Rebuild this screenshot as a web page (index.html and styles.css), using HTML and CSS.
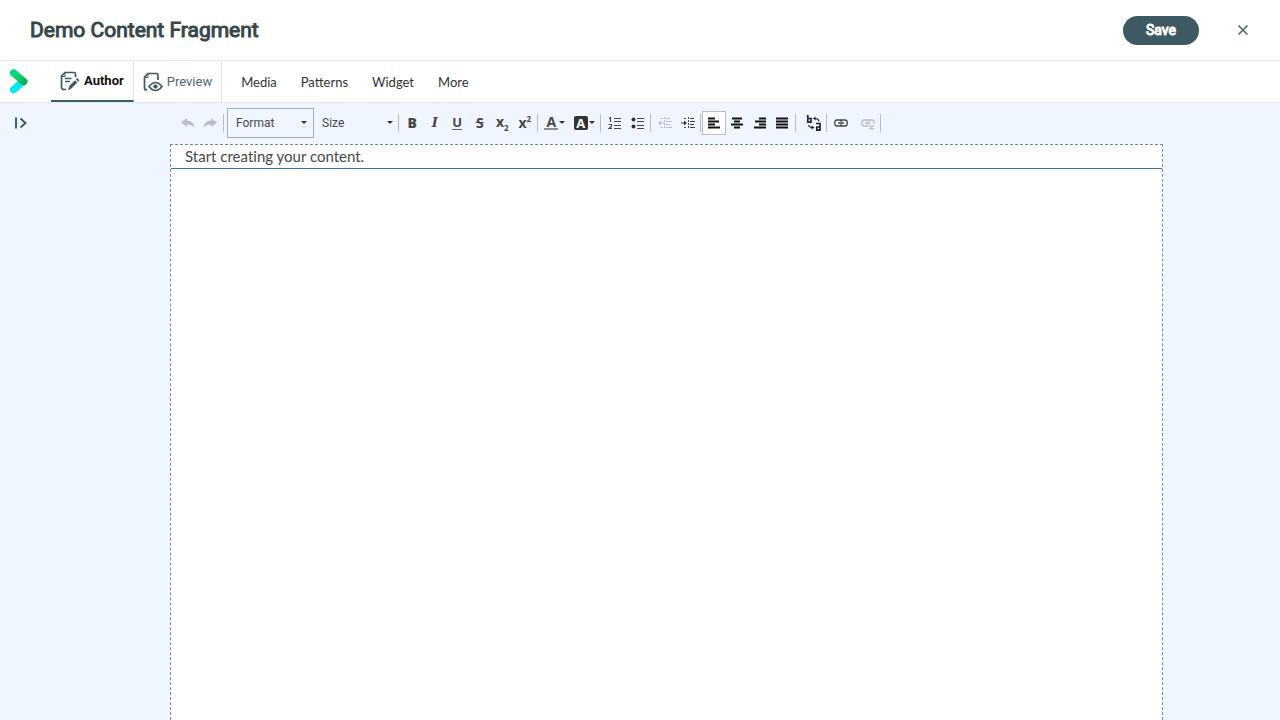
FILE: index.html
```html
<!DOCTYPE html>
<html lang="en">
<head>
<meta charset="utf-8">
<meta name="viewport" content="width=device-width, initial-scale=1">
<title>Demo Content Fragment</title>
<link rel="stylesheet" href="styles.css">
</head>
<body>
<header class="titlebar">
  <h1 class="title">Demo Content Fragment</h1>
  <button class="save" type="button">Save</button>
  <button class="close" type="button" aria-label="Close">
    <svg width="12" height="12" viewBox="0 0 12 12"><path d="M1.500 1.500l9 9M10.500 1.500l-9 9" fill="none" stroke="#4f676c" stroke-width="1.600"/></svg>
  </button>
</header>
<nav class="navbar">
  <a class="logo" href="#" aria-label="Home">
    <svg width="20" height="28" viewBox="0 0 20 28">
      <defs>
        <linearGradient id="logo-top" x1="0" y1="0" x2="1" y2="1"><stop offset="0" stop-color="#00dc7c"/><stop offset=".6" stop-color="#14cc66"/><stop offset="1" stop-color="#0ab058"/></linearGradient>
      </defs>
      <path d="M4.700 22.500L14 14.500" stroke="#05e6f5" stroke-width="7.500" stroke-linecap="round"/>
      <path d="M4.700 6L14.700 14.500" stroke="url(#logo-top)" stroke-width="7.500" stroke-linecap="round"/>
    </svg>
  </a>
  <a class="mode mode-active" href="#">
    <svg class="mode-icon" width="20" height="20" viewBox="0 0 20 20" fill="none" stroke="#3d5a63" stroke-width="1.700">
      <path d="M15.500 6V3Q15.500 1.500 14 1.500H5L1.500 5V16Q1.500 18.500 4 18.500H6"/><path d="M1.500 5.500H5V1.500" stroke-width="1"/>
      <path d="M5 7.500H11.500M5 10.500H10" stroke-width="1.300"/>
      <path d="M10 16.500L16.200 10.300" stroke-width="3.200"/><path d="M17 9.500L18.300 8.200" stroke-width="3.200"/><path d="M8 19l1-3.500 2.500 2.500z" fill="#3d5a63" stroke="none"/>
    </svg>
    Author
  </a>
  <a class="mode" href="#">
    <svg class="mode-icon" width="20" height="20" viewBox="0 0 20 20" fill="none" stroke="#3d5a63" stroke-width="1.700">
      <path d="M15 8V3Q15 1.500 13.500 1.500H5L1.500 5V16Q1.500 18 4 18"/><path d="M1.500 5.500H5V1.500" stroke-width="1"/>
      <path d="M6 14.500Q12.500 6.500 19 14.500Q12.500 22.500 6 14.500Z"/><circle cx="12.500" cy="14.500" r="1.700" fill="#3d5a63" stroke-width="1"/>
    </svg>
    Preview
  </a>
  <div class="menus">
    <a class="menu" href="#">Media</a><a class="menu" href="#">Patterns</a><a class="menu" href="#">Widget</a><a class="menu" href="#">More</a>
  </div>
</nav>
<main class="workspace">
  <aside class="rail">
    <button class="expand" type="button" aria-label="Expand panel">
      <svg width="14" height="14" viewBox="0 0 14 14" fill="none" stroke="#3d5a63" stroke-width="1.900"><path d="M2 1.500V12.500M6.500 2.500L11.500 7L6.500 11.500"/></svg>
    </button>
  </aside>
  <section class="editor">
    <div class="toolbar" role="toolbar" aria-label="Formatting">
      <div class="group group-history">
        <button class="tool" type="button" aria-label="Undo" disabled><svg width="14" height="12" viewBox="0 0 14 12"><path d="M6 1V3.600Q12.500 4 13.500 10.500Q10.500 7.500 6 7.500V10L0 5.500Z" fill="#b9bfc3"/></svg></button>
        <button class="tool" type="button" aria-label="Redo" disabled><svg width="14" height="12" viewBox="0 0 14 12"><path d="M8 1V3.600Q1.500 4 .500 10.500Q3.500 7.500 8 7.500V10L14 5.500Z" fill="#b9bfc3"/></svg></button>
      </div>
      <label class="combo combo-boxed"><select class="select" aria-label="Format"><option>Format</option></select><i class="caret"></i></label>
      <label class="combo"><select class="select" aria-label="Size"><option>Size</option></select><i class="caret"></i></label>
      <div class="group group-text">
        <button class="tool" type="button" aria-label="Bold"><b>B</b></button>
        <button class="tool" type="button" aria-label="Italic"><i class="italic">I</i></button>
        <button class="tool" type="button" aria-label="Underline"><span class="underline">U</span></button>
        <button class="tool" type="button" aria-label="Strikethrough"><s>S</s></button>
        <button class="tool" type="button" aria-label="Subscript"><span class="script">x<sub>2</sub></span></button>
        <button class="tool" type="button" aria-label="Superscript"><span class="script">x<sup>2</sup></span></button>
      </div>
      <div class="group group-color">
        <button class="tool" type="button" aria-label="Text color"><span class="ink">A</span><i class="caret"></i></button>
        <button class="tool" type="button" aria-label="Background color"><span class="ink ink-filled">A</span><i class="caret"></i></button>
      </div>
      <div class="group group-pair">
        <button class="tool" type="button" aria-label="Numbered list"><svg width="14" height="14" viewBox="0 0 14 14" fill="none" stroke="#484848"><path d="M1 2.500L2.500 1.500V6M.500 8.500H3.500V10.500L1 12.500H4" stroke-width="1.100"/><path d="M6 2.500H13M6 5.500H13M6 9.500H13M6 12.500H13"/></svg></button>
        <button class="tool" type="button" aria-label="Bulleted list"><svg width="14" height="14" viewBox="0 0 14 14"><circle cx="2.500" cy="3.500" r="2" fill="#333"/><circle cx="2.500" cy="10.500" r="2" fill="#333"/><path d="M6 2.500H13M6 5.500H13M6 9.500H13M6 12.500H13" stroke="#484848"/></svg></button>
      </div>
      <div class="group group-pair">
        <button class="tool" type="button" aria-label="Decrease indent" disabled><svg width="14" height="14" viewBox="0 0 14 14" fill="none" stroke="#b9bfc3"><path d="M6.500 1V13" stroke-dasharray="2 1"/><path d="M8 2.500H12M8 5.500H14M8 8.500H12M8 11.500H14M2.500 2.500H5M2.500 11.500H5M1 7H6"/><path d="M0 7L3 4.500V9.500Z" fill="#b9bfc3" stroke="none"/></svg></button>
        <button class="tool" type="button" aria-label="Increase indent"><svg width="14" height="14" viewBox="0 0 14 14" fill="none" stroke="#484848"><path d="M7.500 1V13" stroke-dasharray="2 1"/><path d="M9 2.500H13M9 5.500H14M9 8.500H13M9 11.500H14M3 2.500H5M3 11.500H5M0 7H4"/><path d="M6 7L3 4.500V9.500Z" fill="#333" stroke="none"/></svg></button>
      </div>
      <div class="group group-align">
        <button class="tool tool-on" type="button" aria-label="Align left"><svg width="12" height="12" viewBox="0 0 12 12"><path d="M0 1.500H7M0 4.500H11M0 7.500H7M0 10.500H12" stroke="#111" stroke-width="1.800"/></svg></button>
        <button class="tool" type="button" aria-label="Center"><svg width="12" height="12" viewBox="0 0 12 12"><path d="M1 1.500H11M3 4.500H9M0 7.500H12M3 10.500H9" stroke="#111" stroke-width="1.800"/></svg></button>
        <button class="tool" type="button" aria-label="Align right"><svg width="12" height="12" viewBox="0 0 12 12"><path d="M5 1.500H12M1 4.500H12M5 7.500H12M0 10.500H12" stroke="#111" stroke-width="1.800"/></svg></button>
        <button class="tool" type="button" aria-label="Justify"><svg width="12" height="12" viewBox="0 0 12 12"><path d="M0 1.500H12M0 4.500H12M0 7.500H12M0 10.500H12" stroke="#111" stroke-width="1.800"/></svg></button>
      </div>
      <div class="group group-lang">
        <button class="tool" type="button" aria-label="Language"><svg width="16" height="16" viewBox="0 0 16 16" fill="none" stroke="#222" stroke-width="1.700"><path d="M1.800 0V7.200H5V3.500H1.800M10 8.500H14V15.200H10.800V12H14"/><path d="M9 3.500Q12.500 3.500 13 6.500M2.500 10Q3 12.500 6 12.500" stroke-width="1.100"/><path d="M9.500 1.500L7 3.500L9.500 5.500ZM5.500 10.500L8.500 12.500L5.500 14.500Z" fill="#222" stroke="none"/></svg></button>
      </div>
      <div class="group group-link">
        <button class="tool" type="button" aria-label="Link"><svg width="14" height="14" viewBox="0 0 14 14" fill="none" stroke="#484848" stroke-width="1.300"><path d="M6.500 5.500V4H3Q.700 4 .700 7T3 10H6.500V8.500M7.500 5.500V4H11Q13.300 4 13.300 7T11 10H7.500V8.500M4 7H10"/></svg></button>
        <button class="tool" type="button" aria-label="Unlink" disabled><svg width="14" height="14" viewBox="0 0 14 14" fill="none" stroke="#b9bfc3" stroke-width="1.300"><path d="M6.500 5.500V4H3Q.700 4 .700 7T3 10H6.500V8.500M7.500 5.500V4H11Q13.300 4 13.300 7.500M4 7H9.500M8 9L13 13.500M13 9L8 13.500"/></svg></button>
      </div>
    </div>
    <article class="page">
      <p class="paragraph" contenteditable="true">Start creating your content.</p>
    </article>
  </section>
</main>
</body>
</html>
```
FILE: styles.css
```css
* { box-sizing: border-box; }
body {
  margin: 0;
  min-height: 100vh;
  display: flex;
  flex-direction: column;
  background: #fff;
  color: #333;
  font-family: Roboto, "Liberation Sans", sans-serif;
}
button { padding: 0; border: 0; background: none; font: inherit; color: inherit; }
a { color: inherit; text-decoration: none; }
svg { display: block; flex: none; }

.titlebar {
  display: flex;
  align-items: center;
  height: 61px;
  padding: 0 29px 0 30px;
  border-bottom: 1px solid #e6e8ea;
}
.title { flex: 1; margin: 0; font-size: 21px; line-height: 28px; font-weight: 400; color: #36474a; -webkit-text-stroke: 1px #36474a; }
.save {
  width: 76px;
  height: 29px;
  border-radius: 15px;
  background: #3d5a63;
  color: #fff;
  font-size: 14px;
  font-weight: 400;
  -webkit-text-stroke: 1px #fff;
}
.close { display: grid; place-items: center; width: 16px; height: 16px; margin-left: 36px; }

.navbar { display: flex; height: 42px; border-bottom: 1px solid #e3eaf0; }
.logo { width: 51px; padding: 6px 0 0 9px; }
.mode {
  display: flex;
  align-items: center;
  gap: 4px;
  padding: 0 9px;
  border-right: 1px solid #e0e3e6;
  font-size: 13px;
  color: #4f676f;
}
.mode-active { border-bottom: 2px solid #3d5a63; font-weight: 700; color: #111; }
.menus { display: flex; align-items: center; gap: 24px; padding: 1px 19px 0; font: 13px/20px Lato, sans-serif; }

.workspace { flex: 1; display: flex; background: #eff6ff; }
.rail { width: 52px; padding: 12px 14px; }
.editor { flex: 1; display: flex; flex-direction: column; padding: 0 117px 0 118px; }

.toolbar { display: flex; align-items: center; height: 41px; padding: 0 7px 2px; color: #484848; }
.group { position: relative; display: flex; height: 24px; }
.group::after { content: ""; position: absolute; right: 0; top: 3px; width: 1px; height: 18px; background: #b5bdc4; }
.group-history { width: 50px; padding-right: 6px; }
.group-history::after { right: 3px; }
.group-text { width: 139px; padding: 0 2px; }
.group-color { width: 63px; padding: 0 2px; }
.group-pair { width: 50px; padding: 0 2px; }
.group-align { width: 95px; padding: 0 3px 0 1px; }
.group-lang { width: 31px; padding-left: 4px; }
.group-link { width: 54px; }
.tool {
  flex: 1;
  display: flex;
  align-items: center;
  justify-content: center;
  font: 700 14px/16px "Open Sans", sans-serif;
}
.tool-on { border: 1px solid #b8bec4; background: #fff; }
.italic { font-family: "DejaVu Serif", serif; font-size: 13px; }
.underline { height: 15px; line-height: 14px; font-size: 13px; border-bottom: 1px solid #666; }
.script { font-size: 14px; line-height: 16px; }
.script sub, .script sup { font-size: 8px; line-height: 8px; }
.ink { width: 14px; height: 15px; line-height: 14px; font-size: 14px; border-bottom: 2px solid #8b8f93; }
.ink-filled { height: 14px; border: 0; border-radius: 2px; background: #333; color: #fff; font-size: 13px; }
.caret { flex: none; border: 3px solid transparent; border-top-color: #333; border-bottom: 0; margin-left: 1px; }

.combo { display: flex; align-items: center; width: 85px; height: 30px; padding: 0 6px 0 8px; }
.combo::after { content: ""; width: 1px; height: 18px; margin: 0 -6px 0 5px; background: #b5bdc4; }
.combo-boxed { width: 87px; padding: 0 6px 0 8px; border: 1px solid #a4adb5; }
.combo-boxed::after { content: none; }
.select {
  appearance: none;
  flex: 1;
  min-width: 0;
  padding: 0;
  border: 0;
  background: none;
  color: #484848;
  font: 12px/16px Roboto, "Liberation Sans", sans-serif;
}

.page { flex: 1; border: 1px dashed #6f8f98; border-bottom: 0; background: #fff; }
.paragraph { margin: 0; padding: 0 14px; border-bottom: 1px solid #2f76a8; font: 15px/23px Lato, sans-serif; font-variant-ligatures: none; color: #484848; outline: 0; }
```
